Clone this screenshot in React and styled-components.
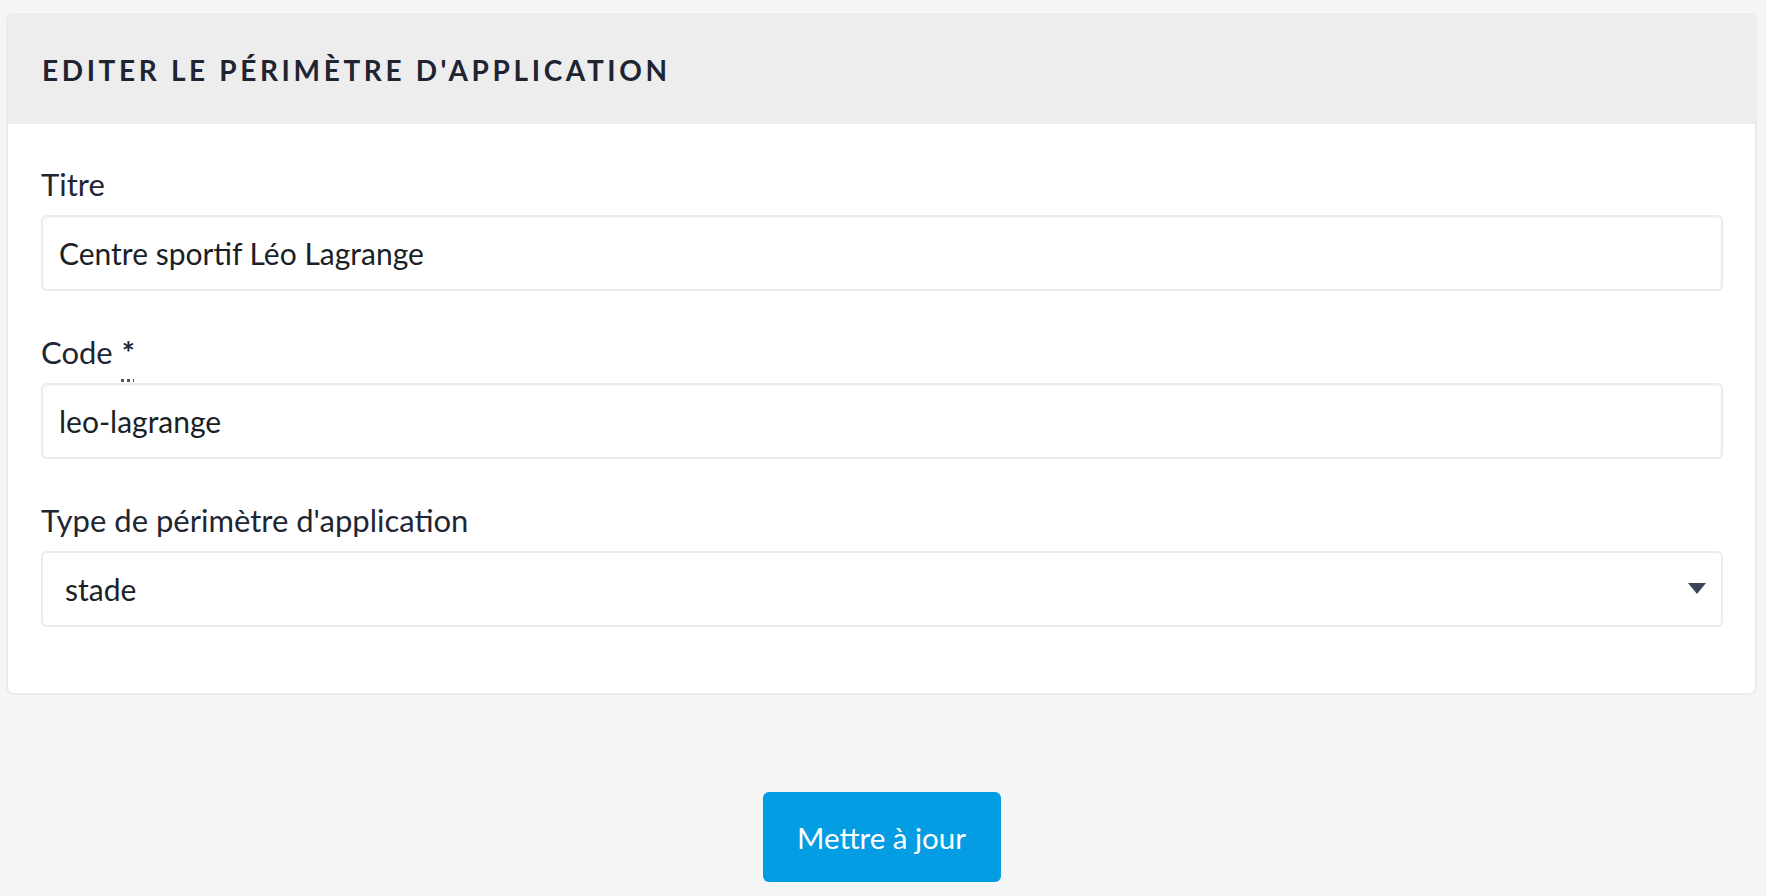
import React from 'react';
import styled, { createGlobalStyle } from 'styled-components';

const GlobalStyle = createGlobalStyle`
    html, body {
        margin: 0;
        padding: 0;
        background: #f5f5f5;
        font-family: Lato, "Noto Sans", sans-serif;
        color: #1f2633;
    }
`

const Page = styled.div`
    padding: 13px 9px 15px 6px;
`

const Card = styled.section`
    background: #ffffff;
    border: 2px solid #ebebeb;
    border-radius: 8px;
    overflow: hidden;
`

const CardHeader = styled.header`
    display: flex;
    align-items: center;
    height: 109px;
    padding: 0 34px;
    background: #ededed;
`

const CardTitle = styled.h1`
    margin: 0;
    font-size: 28px;
    font-weight: 700;
    letter-spacing: 0.13em;
    text-transform: uppercase;
    color: #1e2431;
`

const CardBody = styled.div`
    display: flex;
    flex-direction: column;
    gap: 41px;
    padding: 40px 32px 66px 33px;
`

const Field = styled.div`
    display: flex;
    flex-direction: column;
`

const Label = styled.label`
    font-size: 31px;
    line-height: 40px;
    margin-bottom: 11px;
    color: #1f2633;
`

const Required = styled.abbr`
    margin-left: 9px;
    font-weight: 700;
    text-decoration: underline dotted;
    text-decoration-color: #555;
    text-underline-offset: 15px;
    cursor: help;
`

const Input = styled.input`
    box-sizing: border-box;
    height: 76px;
    width: 100%;
    padding: 0 16px;
    border: 2px solid #ebebeb;
    border-radius: 6px;
    box-shadow: inset 0 2px 2px rgba(0, 0, 0, 0.03);
    font-family: inherit;
    font-size: 30px;
    color: #1b1f27;
    background: #ffffff;
    outline: none;
`

const SelectBox = styled.div`
    position: relative;
`

const Select = styled.select`
    box-sizing: border-box;
    appearance: none;
    height: 76px;
    width: 100%;
    padding: 0 60px 0 22px;
    border: 2px solid #ebebeb;
    border-radius: 6px;
    font-family: inherit;
    font-size: 30px;
    color: #1b1f27;
    background: #ffffff;
    outline: none;
`

const Caret = styled.svg`
    position: absolute;
    right: 17px;
    top: 50%;
    margin-top: -6px;
    pointer-events: none;
`

const Actions = styled.div`
    display: flex;
    justify-content: center;
    margin-top: 97px;
`

const Button = styled.button`
    width: 238px;
    height: 90px;
    border: none;
    border-radius: 6px;
    background: #049de4;
    color: #ffffff;
    font-family: inherit;
    font-size: 29.5px;
    cursor: pointer;
`

const App = () => (
    <>
        <GlobalStyle />
        <Page>
            <Card>
                <CardHeader>
                    <CardTitle>Editer le périmètre d'application</CardTitle>
                </CardHeader>
                <CardBody>
                    <Field>
                        <Label htmlFor="titre">Titre</Label>
                        <Input id="titre" defaultValue="Centre sportif Léo Lagrange" />
                    </Field>
                    <Field>
                        <Label htmlFor="code">
                            Code<Required title="requis">*</Required>
                        </Label>
                        <Input id="code" defaultValue="leo-lagrange" />
                    </Field>
                    <Field>
                        <Label htmlFor="type">Type de périmètre d'application</Label>
                        <SelectBox>
                            <Select id="type" defaultValue="stade">
                                <option value="stade">stade</option>
                                <option value="gymnase">gymnase</option>
                                <option value="piscine">piscine</option>
                            </Select>
                            <Caret width="18" height="11" viewBox="0 0 18 11">
                                <path d="M0 0 H18 L9 11 Z" fill="#3c4557" />
                            </Caret>
                        </SelectBox>
                    </Field>
                </CardBody>
            </Card>
            <Actions>
                <Button type="button">Mettre à jour</Button>
            </Actions>
        </Page>
    </>
);

export default App;
